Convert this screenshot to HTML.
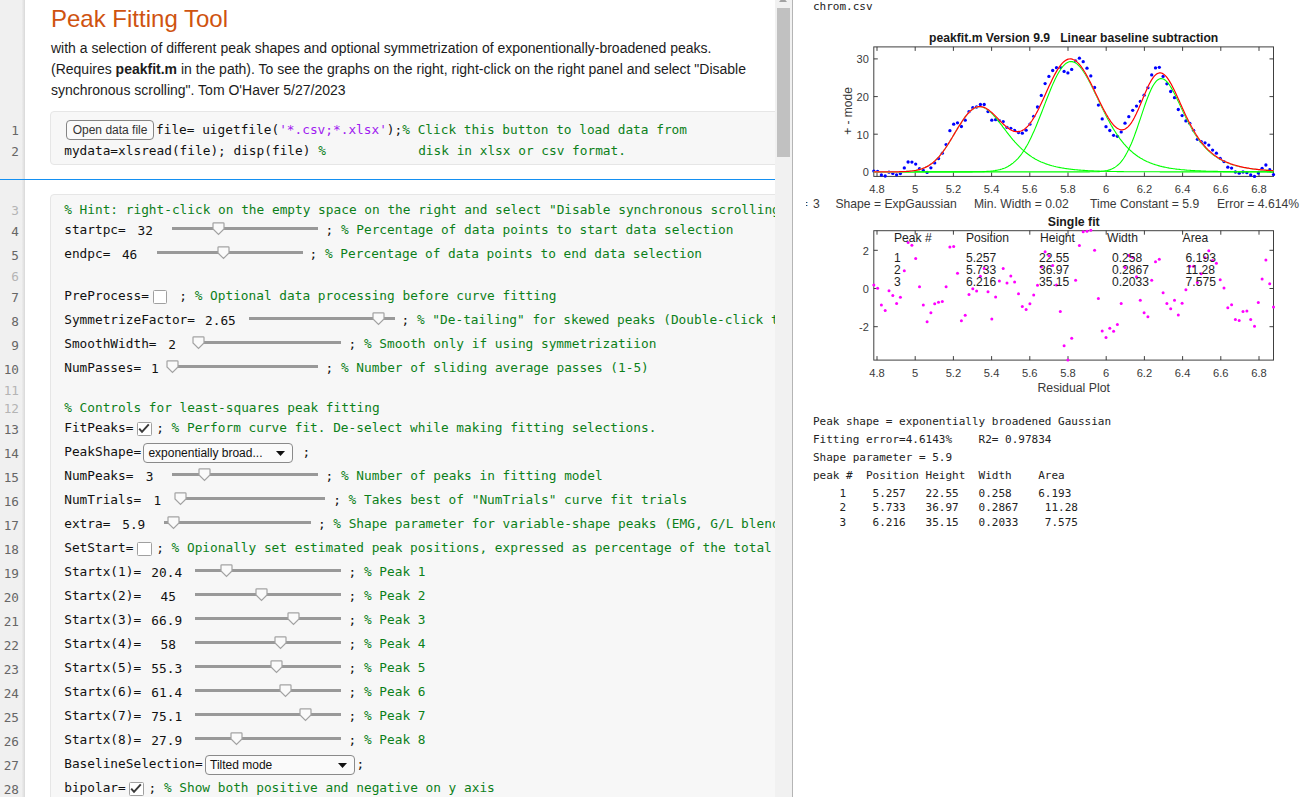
<!DOCTYPE html>
<html lang="en"><head><meta charset="utf-8"><title>Peak Fitting Tool</title>
<style>
html,body{margin:0;padding:0}
body{width:1303px;height:797px;overflow:hidden;position:relative;background:#fff;font-family:"Liberation Sans",Arial,sans-serif;color:#1c1c1c}
#left{position:absolute;left:0;top:0;width:775px;height:797px;overflow:hidden;background:#fff}
#gut{position:absolute;left:0;top:0;width:24.5px;height:797px;background:linear-gradient(90deg,#f0f0f0 0,#f0f0f0 21.5px,#dcdcdc 24.5px)}
#gut em{position:absolute;right:5.5px;font:normal 12.7px/18px "DejaVu Sans Mono","Liberation Mono",monospace;color:#666;font-style:normal}
#gut em.l{color:#b4b4b4}
h1{position:absolute;left:51px;top:4px;margin:0;font-size:24px;line-height:30px;font-weight:normal;color:#cf5310;white-space:nowrap}
p{position:absolute;left:51px;top:37.5px;margin:0;font-size:14px;line-height:21px;white-space:nowrap;color:#1c1c1c}
.blk{position:absolute;left:50px;width:760px;background:#f7f7f7;border:1px solid #e6e6e6;border-radius:4px;box-sizing:border-box}
#code span{position:absolute;font:12.79px/20px "DejaVu Sans Mono","Liberation Mono",monospace;white-space:pre;color:#111}
#code b{font-weight:normal}
#code b.c{color:#0c8019}
#code b.s{color:#a020f0}
#code i{position:absolute;font-style:normal;box-sizing:border-box}
i.tr{height:3px;background:#999}
svg.th{position:absolute}
i.cb{width:14.6px;height:14px;border:1.3px solid #a0a0a0;border-radius:1.5px;background:#fff;overflow:hidden}
i.dd{width:149.5px;height:19.8px;border:1px solid #8a8a8a;border-radius:4px;background:#fafafa}
i.dd u{position:absolute;left:4px;top:-0.5px;text-decoration:none;font:12px/18px "Liberation Sans",Arial,sans-serif;color:#111;white-space:nowrap}
i.btn{width:87.5px;height:20px;border:1px solid #858585;border-radius:4px;background:#fafafa;font:12px/18px "Liberation Sans",Arial,sans-serif;color:#333;text-align:center;white-space:nowrap}
#hr{position:absolute;left:0;top:179px;width:775px;height:1.3px;background:#1490f2}
#sb{position:absolute;left:775px;top:0;width:17px;height:797px;background:#f1f1f1}
#sb i{position:absolute;left:2px;top:8px;width:13px;height:148.5px;background:#c1c1c1}
#sb b{position:absolute;left:4px;top:-3px;width:0;height:0;border-left:4.5px solid transparent;border-right:4.5px solid transparent;border-bottom:5px solid #a3a3a3}
#dv{position:absolute;left:791.5px;top:0;width:1.5px;height:797px;background:linear-gradient(90deg,#d0d0d0,#999)}
#right{position:absolute;left:793px;top:0;width:510px;height:797px;background:#fff;overflow:hidden}
pre{position:absolute;margin:0;font:11px/18px "DejaVu Sans Mono","Liberation Mono",monospace;color:#222;white-space:pre}
</style></head><body>
<div id="left">
<div id="gut"><em style="top:122px">1</em><em style="top:143px">2</em><em class="l" style="top:202px">3</em><em style="top:223px">4</em><em style="top:247px">5</em><em class="l" style="top:268px">6</em><em style="top:289px">7</em><em style="top:313px">8</em><em style="top:337px">9</em><em style="top:361px">10</em><em class="l" style="top:382px">11</em><em class="l" style="top:400px">12</em><em style="top:421px">13</em><em style="top:445px">14</em><em style="top:469px">15</em><em style="top:493px">16</em><em style="top:517px">17</em><em style="top:541px">18</em><em style="top:565px">19</em><em style="top:589px">20</em><em style="top:613px">21</em><em style="top:637px">22</em><em style="top:661px">23</em><em style="top:685px">24</em><em style="top:709px">25</em><em style="top:733px">26</em><em style="top:757px">27</em><em style="top:781px">28</em></div>
<h1>Peak Fitting Tool</h1>
<p>with a selection of different peak shapes and optional symmetrization of exponentionally-broadened peaks.<br>(Requires <b>peakfit.m</b> in the path). To see the graphs on the right, right-click on the right panel and select "Disable<br>synchronous scrolling". Tom O'Haver 5/27/2023</p>
<div class="blk" style="top:111px;height:54px"></div>
<div class="blk" style="top:194px;height:640px"></div>
<div id="hr"></div>
<div id="code">
<i class="btn" style="left:66.3px;top:120px">Open data file</i>
<span style="left:156.0px;top:119.6px">file= uigetfile(<b class="s">'*.csv;*.xlsx'</b>);<b class="c">% Click this button to load data from</b></span>
<span style="left:64.2px;top:140.6px">mydata=xlsread(file); disp(file) <b class="c">%            disk in xlsx or csv format.</b></span>
<span style="left:64.2px;top:199.9px"><b class="c">% Hint: right-click on the empty space on the right and select "Disable synchronous scrolling"</b></span>
<span style="left:64.2px;top:220.1px">startpc=</span><span style="left:137.5px;top:220.9px">32</span><i class="tr" style="left:171.9px;top:227.0px;width:145.8px"></i><svg class="th" style="left:212.3px;top:222.2px" width="13" height="15" viewBox="0 0 13 15"><path d="M1 1.6Q1 0.8 1.8 0.8H11.2Q12 0.8 12 1.6V7L6.5 12.5L1 7Z" fill="#fafafa" stroke="#a2a2a2" stroke-width="1.2"/></svg><span style="left:325.5px;top:220.1px">; <b class="c">% Percentage of data points to start data selection</b></span>
<span style="left:64.2px;top:244.1px">endpc=</span><span style="left:121.9px;top:244.9px">46</span><i class="tr" style="left:156.6px;top:251.0px;width:146.4px"></i><svg class="th" style="left:217.2px;top:246.2px" width="13" height="15" viewBox="0 0 13 15"><path d="M1 1.6Q1 0.8 1.8 0.8H11.2Q12 0.8 12 1.6V7L6.5 12.5L1 7Z" fill="#fafafa" stroke="#a2a2a2" stroke-width="1.2"/></svg><span style="left:309.6px;top:244.1px">; <b class="c">% Percentage of data points to end data selection</b></span>
<span style="left:64.2px;top:286.1px">PreProcess=</span><i class="cb" style="left:152.5px;top:289.8px"></i><span style="left:171.6px;top:286.1px"> ; <b class="c">% Optional data processing before curve fitting</b></span>
<span style="left:64.2px;top:310.1px">SymmetrizeFactor=</span><span style="left:205.0px;top:310.9px">2.65</span><i class="tr" style="left:249.3px;top:317.0px;width:146.0px"></i><svg class="th" style="left:371.9px;top:312.2px" width="13" height="15" viewBox="0 0 13 15"><path d="M1 1.6Q1 0.8 1.8 0.8H11.2Q12 0.8 12 1.6V7L6.5 12.5L1 7Z" fill="#fafafa" stroke="#a2a2a2" stroke-width="1.2"/></svg><span style="left:401.6px;top:310.1px">; <b class="c">% "De-tailing" for skewed peaks (Double-click to change the range)</b></span>
<span style="left:64.2px;top:334.1px">SmoothWidth=</span><span style="left:168.2px;top:334.9px">2</span><i class="tr" style="left:194.5px;top:341.0px;width:146.2px"></i><svg class="th" style="left:192.4px;top:336.2px" width="13" height="15" viewBox="0 0 13 15"><path d="M1 1.6Q1 0.8 1.8 0.8H11.2Q12 0.8 12 1.6V7L6.5 12.5L1 7Z" fill="#fafafa" stroke="#a2a2a2" stroke-width="1.2"/></svg><span style="left:348.6px;top:334.1px">; <b class="c">% Smooth only if using symmetrizatiion</b></span>
<span style="left:64.2px;top:358.1px">NumPasses=</span><span style="left:151.0px;top:358.9px">1</span><i class="tr" style="left:168.5px;top:365.0px;width:149.2px"></i><svg class="th" style="left:166.2px;top:360.2px" width="13" height="15" viewBox="0 0 13 15"><path d="M1 1.6Q1 0.8 1.8 0.8H11.2Q12 0.8 12 1.6V7L6.5 12.5L1 7Z" fill="#fafafa" stroke="#a2a2a2" stroke-width="1.2"/></svg><span style="left:325.6px;top:358.1px">; <b class="c">% Number of sliding average passes (1-5)</b></span>
<span style="left:64.2px;top:397.9px"><b class="c">% Controls for least-squares peak fitting</b></span>
<span style="left:64.2px;top:418.3px">FitPeaks=</span><i class="cb" style="left:137.1px;top:422.0px"><svg width="12" height="12" viewBox="0 0 12 12" style="position:absolute;left:0;top:0"><path d="M1.2 5.7L4 8.8L10.8 1.3" fill="none" stroke="#3a3a3a" stroke-width="2"/></svg></i><span style="left:156.2px;top:418.3px">; <b class="c">% Perform curve fit. De-select while making fitting selections.</b></span>
<span style="left:64.2px;top:442.3px">PeakShape=</span><i class="dd" style="left:143.4px;top:443.2px"><u>exponentially broad...</u><svg width="9" height="5" viewBox="0 0 9 5" style="position:absolute;right:6.5px;top:7px"><path d="M0 0H9L4.5 5Z" fill="#111"/></svg></i><span style="left:294.8px;top:442.3px"> ;</span>
<span style="left:64.2px;top:466.1px">NumPeaks=</span><span style="left:145.8px;top:466.9px">3</span><i class="tr" style="left:171.9px;top:473.0px;width:145.8px"></i><svg class="th" style="left:198.2px;top:468.2px" width="13" height="15" viewBox="0 0 13 15"><path d="M1 1.6Q1 0.8 1.8 0.8H11.2Q12 0.8 12 1.6V7L6.5 12.5L1 7Z" fill="#fafafa" stroke="#a2a2a2" stroke-width="1.2"/></svg><span style="left:325.6px;top:466.1px">; <b class="c">% Number of peaks in fitting model</b></span>
<span style="left:64.2px;top:490.1px">NumTrials=</span><span style="left:153.5px;top:490.9px">1</span><i class="tr" style="left:176.0px;top:497.0px;width:149.4px"></i><svg class="th" style="left:173.9px;top:492.2px" width="13" height="15" viewBox="0 0 13 15"><path d="M1 1.6Q1 0.8 1.8 0.8H11.2Q12 0.8 12 1.6V7L6.5 12.5L1 7Z" fill="#fafafa" stroke="#a2a2a2" stroke-width="1.2"/></svg><span style="left:333.2px;top:490.1px">; <b class="c">% Takes best of "NumTrials" curve fit trials</b></span>
<span style="left:64.2px;top:514.1px">extra=</span><span style="left:122.2px;top:514.9px">5.9</span><i class="tr" style="left:164.2px;top:521.0px;width:146.5px"></i><svg class="th" style="left:167.2px;top:516.2px" width="13" height="15" viewBox="0 0 13 15"><path d="M1 1.6Q1 0.8 1.8 0.8H11.2Q12 0.8 12 1.6V7L6.5 12.5L1 7Z" fill="#fafafa" stroke="#a2a2a2" stroke-width="1.2"/></svg><span style="left:317.9px;top:514.1px">; <b class="c">% Shape parameter for variable-shape peaks (EMG, G/L blend, etc)</b></span>
<span style="left:64.2px;top:538.1px">SetStart=</span><i class="cb" style="left:137.1px;top:541.8px"></i><span style="left:156.2px;top:538.1px">; <b class="c">% Opionally set estimated peak positions, expressed as percentage of the total range</b></span>
<span style="left:64.2px;top:562.1px">Startx(1)=</span><span style="left:151.3px;top:562.9px">20.4</span><i class="tr" style="left:195.0px;top:569.0px;width:145.8px"></i><svg class="th" style="left:219.6px;top:564.2px" width="13" height="15" viewBox="0 0 13 15"><path d="M1 1.6Q1 0.8 1.8 0.8H11.2Q12 0.8 12 1.6V7L6.5 12.5L1 7Z" fill="#fafafa" stroke="#a2a2a2" stroke-width="1.2"/></svg><span style="left:348.6px;top:562.1px">; <b class="c">% Peak 1</b></span>
<span style="left:64.2px;top:586.1px">Startx(2)=</span><span style="left:160.5px;top:586.9px">45</span><i class="tr" style="left:195.0px;top:593.0px;width:145.8px"></i><svg class="th" style="left:255.3px;top:588.2px" width="13" height="15" viewBox="0 0 13 15"><path d="M1 1.6Q1 0.8 1.8 0.8H11.2Q12 0.8 12 1.6V7L6.5 12.5L1 7Z" fill="#fafafa" stroke="#a2a2a2" stroke-width="1.2"/></svg><span style="left:348.6px;top:586.1px">; <b class="c">% Peak 2</b></span>
<span style="left:64.2px;top:610.1px">Startx(3)=</span><span style="left:151.3px;top:610.9px">66.9</span><i class="tr" style="left:195.0px;top:617.0px;width:145.8px"></i><svg class="th" style="left:287.2px;top:612.2px" width="13" height="15" viewBox="0 0 13 15"><path d="M1 1.6Q1 0.8 1.8 0.8H11.2Q12 0.8 12 1.6V7L6.5 12.5L1 7Z" fill="#fafafa" stroke="#a2a2a2" stroke-width="1.2"/></svg><span style="left:348.6px;top:610.1px">; <b class="c">% Peak 3</b></span>
<span style="left:64.2px;top:634.1px">Startx(4)=</span><span style="left:160.5px;top:634.9px">58</span><i class="tr" style="left:195.0px;top:641.0px;width:145.8px"></i><svg class="th" style="left:274.0px;top:636.2px" width="13" height="15" viewBox="0 0 13 15"><path d="M1 1.6Q1 0.8 1.8 0.8H11.2Q12 0.8 12 1.6V7L6.5 12.5L1 7Z" fill="#fafafa" stroke="#a2a2a2" stroke-width="1.2"/></svg><span style="left:348.6px;top:634.1px">; <b class="c">% Peak 4</b></span>
<span style="left:64.2px;top:658.1px">Startx(5)=</span><span style="left:151.3px;top:658.9px">55.3</span><i class="tr" style="left:195.0px;top:665.0px;width:145.8px"></i><svg class="th" style="left:270.3px;top:660.2px" width="13" height="15" viewBox="0 0 13 15"><path d="M1 1.6Q1 0.8 1.8 0.8H11.2Q12 0.8 12 1.6V7L6.5 12.5L1 7Z" fill="#fafafa" stroke="#a2a2a2" stroke-width="1.2"/></svg><span style="left:348.6px;top:658.1px">; <b class="c">% Peak 5</b></span>
<span style="left:64.2px;top:682.1px">Startx(6)=</span><span style="left:151.3px;top:682.9px">61.4</span><i class="tr" style="left:195.0px;top:689.0px;width:145.8px"></i><svg class="th" style="left:279.2px;top:684.2px" width="13" height="15" viewBox="0 0 13 15"><path d="M1 1.6Q1 0.8 1.8 0.8H11.2Q12 0.8 12 1.6V7L6.5 12.5L1 7Z" fill="#fafafa" stroke="#a2a2a2" stroke-width="1.2"/></svg><span style="left:348.6px;top:682.1px">; <b class="c">% Peak 6</b></span>
<span style="left:64.2px;top:706.1px">Startx(7)=</span><span style="left:151.3px;top:706.9px">75.1</span><i class="tr" style="left:195.0px;top:713.0px;width:145.8px"></i><svg class="th" style="left:298.8px;top:708.2px" width="13" height="15" viewBox="0 0 13 15"><path d="M1 1.6Q1 0.8 1.8 0.8H11.2Q12 0.8 12 1.6V7L6.5 12.5L1 7Z" fill="#fafafa" stroke="#a2a2a2" stroke-width="1.2"/></svg><span style="left:348.6px;top:706.1px">; <b class="c">% Peak 7</b></span>
<span style="left:64.2px;top:730.1px">Startx(8)=</span><span style="left:151.3px;top:730.9px">27.9</span><i class="tr" style="left:195.0px;top:737.0px;width:145.8px"></i><svg class="th" style="left:229.8px;top:732.2px" width="13" height="15" viewBox="0 0 13 15"><path d="M1 1.6Q1 0.8 1.8 0.8H11.2Q12 0.8 12 1.6V7L6.5 12.5L1 7Z" fill="#fafafa" stroke="#a2a2a2" stroke-width="1.2"/></svg><span style="left:348.6px;top:730.1px">; <b class="c">% Peak 8</b></span>
<span style="left:64.2px;top:754.1px">BaselineSelection=</span><i class="dd" style="left:205.0px;top:755.0px"><u>Tilted mode</u><svg width="9" height="5" viewBox="0 0 9 5" style="position:absolute;right:6.5px;top:7px"><path d="M0 0H9L4.5 5Z" fill="#111"/></svg></i><span style="left:356.4px;top:754.1px">;</span>
<span style="left:64.2px;top:778.1px">bipolar=</span><i class="cb" style="left:129.4px;top:781.8px"><svg width="12" height="12" viewBox="0 0 12 12" style="position:absolute;left:0;top:0"><path d="M1.2 5.7L4 8.8L10.8 1.3" fill="none" stroke="#3a3a3a" stroke-width="2"/></svg></i><span style="left:148.5px;top:778.1px">; <b class="c">% Show both positive and negative on y axis</b></span>
</div>
</div>
<div id="sb"><b></b><i></i></div>
<div id="dv"></div>
<div id="right">
<pre style="left:20px;top:-2px">chrom.csv</pre>
<pre style="left:20px;top:413px">Peak shape = exponentially broadened Gaussian
Fitting error=4.6143%    R2= 0.97834
Shape parameter = 5.9
peak #  Position Height  Width    Area</pre>
<pre style="left:20px;top:487.4px;line-height:14.1px">    1    5.257   22.55   0.258    6.193
    2    5.733   36.97   0.2867    11.28
    3    6.216   35.15   0.2033    7.575</pre>
</div>
<svg width="497" height="375" viewBox="0 0 497 375" style="position:absolute;left:806px;top:25px;overflow:hidden" font-family="Liberation Sans, Arial, sans-serif">
<rect x="67.8" y="21.9" width="399.7" height="129.5" fill="#fff" stroke="#404040" stroke-width="1"/>
<path d="M71.0 151.4v-4M71.0 21.9v4M109.2 151.4v-4M109.2 21.9v4M147.4 151.4v-4M147.4 21.9v4M185.6 151.4v-4M185.6 21.9v4M223.8 151.4v-4M223.8 21.9v4M262.0 151.4v-4M262.0 21.9v4M300.2 151.4v-4M300.2 21.9v4M338.4 151.4v-4M338.4 21.9v4M376.6 151.4v-4M376.6 21.9v4M414.8 151.4v-4M414.8 21.9v4M453.0 151.4v-4M453.0 21.9v4M67.8 146.9h4M467.5 146.9h-4M67.8 109.2h4M467.5 109.2h-4M67.8 71.6h4M467.5 71.6h-4M67.8 33.9h4M467.5 33.9h-4" stroke="#2a2a2a" stroke-width="0.9" fill="none"/>
<text x="71.0" y="167.9" font-size="11.15" fill="#3a3a3a" text-anchor="middle">4.8</text>
<text x="109.2" y="167.9" font-size="11.15" fill="#3a3a3a" text-anchor="middle">5</text>
<text x="147.4" y="167.9" font-size="11.15" fill="#3a3a3a" text-anchor="middle">5.2</text>
<text x="185.6" y="167.9" font-size="11.15" fill="#3a3a3a" text-anchor="middle">5.4</text>
<text x="223.8" y="167.9" font-size="11.15" fill="#3a3a3a" text-anchor="middle">5.6</text>
<text x="262.0" y="167.9" font-size="11.15" fill="#3a3a3a" text-anchor="middle">5.8</text>
<text x="300.2" y="167.9" font-size="11.15" fill="#3a3a3a" text-anchor="middle">6</text>
<text x="338.4" y="167.9" font-size="11.15" fill="#3a3a3a" text-anchor="middle">6.2</text>
<text x="376.6" y="167.9" font-size="11.15" fill="#3a3a3a" text-anchor="middle">6.4</text>
<text x="414.8" y="167.9" font-size="11.15" fill="#3a3a3a" text-anchor="middle">6.6</text>
<text x="453.0" y="167.9" font-size="11.15" fill="#3a3a3a" text-anchor="middle">6.8</text>
<text x="62.8" y="151.3" font-size="11" fill="#3a3a3a" text-anchor="end">0</text>
<text x="62.8" y="113.6" font-size="11" fill="#3a3a3a" text-anchor="end">10</text>
<text x="62.8" y="76.0" font-size="11" fill="#3a3a3a" text-anchor="end">20</text>
<text x="62.8" y="38.3" font-size="11" fill="#3a3a3a" text-anchor="end">30</text>
<clipPath id="c1"><rect x="65.8" y="21.9" width="403.7" height="131.5"/></clipPath>
<g clip-path="url(#c1)">
<g fill="#0000ff"><circle cx="67.8" cy="146.1" r="1.65"/><circle cx="71.6" cy="146.4" r="1.65"/><circle cx="75.4" cy="150.0" r="1.65"/><circle cx="79.2" cy="151.0" r="1.65"/><circle cx="83.0" cy="147.2" r="1.65"/><circle cx="86.8" cy="148.4" r="1.65"/><circle cx="90.6" cy="149.8" r="1.65"/><circle cx="94.4" cy="148.6" r="1.65"/><circle cx="98.3" cy="142.9" r="1.65"/><circle cx="102.1" cy="137.0" r="1.65"/><circle cx="105.9" cy="137.1" r="1.65"/><circle cx="109.7" cy="139.1" r="1.65"/><circle cx="113.5" cy="143.7" r="1.65"/><circle cx="117.3" cy="145.4" r="1.65"/><circle cx="121.1" cy="147.4" r="1.65"/><circle cx="124.9" cy="142.8" r="1.65"/><circle cx="128.7" cy="137.9" r="1.65"/><circle cx="132.5" cy="133.5" r="1.65"/><circle cx="136.3" cy="128.2" r="1.65"/><circle cx="140.1" cy="119.6" r="1.65"/><circle cx="143.9" cy="105.7" r="1.65"/><circle cx="147.7" cy="99.2" r="1.65"/><circle cx="151.5" cy="97.8" r="1.65"/><circle cx="155.4" cy="101.5" r="1.65"/><circle cx="159.2" cy="95.2" r="1.65"/><circle cx="163.0" cy="86.7" r="1.65"/><circle cx="166.8" cy="82.7" r="1.65"/><circle cx="170.6" cy="82.0" r="1.65"/><circle cx="174.4" cy="79.5" r="1.65"/><circle cx="178.2" cy="79.5" r="1.65"/><circle cx="182.0" cy="86.6" r="1.65"/><circle cx="185.8" cy="95.2" r="1.65"/><circle cx="189.6" cy="94.7" r="1.65"/><circle cx="193.4" cy="95.7" r="1.65"/><circle cx="197.2" cy="96.6" r="1.65"/><circle cx="201.0" cy="102.4" r="1.65"/><circle cx="204.8" cy="103.3" r="1.65"/><circle cx="208.6" cy="105.3" r="1.65"/><circle cx="212.5" cy="107.5" r="1.65"/><circle cx="216.3" cy="108.2" r="1.65"/><circle cx="220.1" cy="105.2" r="1.65"/><circle cx="223.9" cy="99.2" r="1.65"/><circle cx="227.7" cy="91.3" r="1.65"/><circle cx="231.5" cy="82.0" r="1.65"/><circle cx="235.3" cy="70.4" r="1.65"/><circle cx="239.1" cy="58.6" r="1.65"/><circle cx="242.9" cy="51.4" r="1.65"/><circle cx="246.7" cy="45.5" r="1.65"/><circle cx="250.5" cy="42.7" r="1.65"/><circle cx="254.3" cy="42.3" r="1.65"/><circle cx="258.1" cy="46.4" r="1.65"/><circle cx="261.9" cy="47.9" r="1.65"/><circle cx="265.7" cy="44.4" r="1.65"/><circle cx="269.6" cy="35.8" r="1.65"/><circle cx="273.4" cy="33.2" r="1.65"/><circle cx="277.2" cy="36.7" r="1.65"/><circle cx="281.0" cy="43.2" r="1.65"/><circle cx="284.8" cy="50.9" r="1.65"/><circle cx="288.6" cy="62.5" r="1.65"/><circle cx="292.4" cy="80.1" r="1.65"/><circle cx="296.2" cy="93.9" r="1.65"/><circle cx="300.0" cy="101.7" r="1.65"/><circle cx="303.8" cy="105.5" r="1.65"/><circle cx="307.6" cy="110.3" r="1.65"/><circle cx="311.4" cy="111.3" r="1.65"/><circle cx="315.2" cy="106.9" r="1.65"/><circle cx="319.0" cy="98.2" r="1.65"/><circle cx="322.8" cy="91.7" r="1.65"/><circle cx="326.7" cy="85.3" r="1.65"/><circle cx="330.5" cy="81.1" r="1.65"/><circle cx="334.3" cy="76.4" r="1.65"/><circle cx="338.1" cy="70.2" r="1.65"/><circle cx="341.9" cy="62.7" r="1.65"/><circle cx="345.7" cy="49.9" r="1.65"/><circle cx="349.5" cy="42.9" r="1.65"/><circle cx="353.3" cy="42.3" r="1.65"/><circle cx="357.1" cy="51.4" r="1.65"/><circle cx="360.9" cy="58.8" r="1.65"/><circle cx="364.7" cy="66.5" r="1.65"/><circle cx="368.5" cy="72.7" r="1.65"/><circle cx="372.3" cy="84.5" r="1.65"/><circle cx="376.1" cy="90.6" r="1.65"/><circle cx="379.9" cy="95.9" r="1.65"/><circle cx="383.8" cy="98.3" r="1.65"/><circle cx="387.6" cy="105.3" r="1.65"/><circle cx="391.4" cy="114.3" r="1.65"/><circle cx="395.2" cy="116.6" r="1.65"/><circle cx="399.0" cy="117.8" r="1.65"/><circle cx="402.8" cy="120.1" r="1.65"/><circle cx="406.6" cy="125.1" r="1.65"/><circle cx="410.4" cy="128.2" r="1.65"/><circle cx="414.2" cy="133.3" r="1.65"/><circle cx="418.0" cy="136.6" r="1.65"/><circle cx="421.8" cy="142.2" r="1.65"/><circle cx="425.6" cy="143.1" r="1.65"/><circle cx="429.4" cy="147.0" r="1.65"/><circle cx="433.2" cy="148.2" r="1.65"/><circle cx="437.0" cy="147.0" r="1.65"/><circle cx="440.9" cy="147.7" r="1.65"/><circle cx="444.7" cy="150.0" r="1.65"/><circle cx="448.5" cy="151.4" r="1.65"/><circle cx="452.3" cy="148.0" r="1.65"/><circle cx="456.1" cy="143.3" r="1.65"/><circle cx="459.9" cy="140.0" r="1.65"/><circle cx="463.7" cy="144.7" r="1.65"/><circle cx="467.5" cy="149.6" r="1.65"/></g>
<path d="M67.8 146.9 L68.8 146.9 L69.8 146.9 L70.8 146.9 L71.8 146.9 L72.8 146.9 L73.8 146.9 L74.8 146.9 L75.8 146.9 L76.8 146.9 L77.8 146.9 L78.8 146.9 L79.8 146.9 L80.8 146.9 L81.8 146.9 L82.8 146.9 L83.8 146.9 L84.8 146.9 L85.8 146.9 L86.8 146.8 L87.8 146.8 L88.8 146.8 L89.8 146.8 L90.8 146.8 L91.8 146.8 L92.8 146.8 L93.8 146.7 L94.8 146.7 L95.8 146.7 L96.9 146.6 L97.9 146.6 L98.9 146.6 L99.9 146.5 L100.9 146.4 L101.9 146.4 L102.9 146.3 L103.9 146.2 L104.9 146.1 L105.9 146.0 L106.9 145.8 L107.9 145.7 L108.9 145.5 L109.9 145.4 L110.9 145.2 L111.9 144.9 L112.9 144.7 L113.9 144.4 L114.9 144.1 L115.9 143.8 L116.9 143.4 L117.9 143.0 L118.9 142.6 L119.9 142.1 L120.9 141.6 L121.9 141.1 L122.9 140.5 L123.9 139.8 L124.9 139.1 L125.9 138.4 L126.9 137.6 L127.9 136.8 L128.9 135.9 L129.9 134.9 L130.9 133.9 L131.9 132.9 L132.9 131.8 L133.9 130.6 L134.9 129.4 L135.9 128.1 L136.9 126.8 L137.9 125.4 L138.9 124.0 L139.9 122.5 L140.9 121.0 L141.9 119.5 L142.9 117.9 L143.9 116.3 L144.9 114.6 L145.9 113.0 L146.9 111.3 L147.9 109.6 L148.9 107.9 L149.9 106.3 L150.9 104.6 L151.9 102.9 L152.9 101.3 L154.0 99.6 L155.0 98.1 L156.0 96.5 L157.0 95.0 L158.0 93.6 L159.0 92.2 L160.0 90.9 L161.0 89.7 L162.0 88.5 L163.0 87.4 L164.0 86.4 L165.0 85.5 L166.0 84.7 L167.0 84.0 L168.0 83.3 L169.0 82.8 L170.0 82.4 L171.0 82.1 L172.0 81.9 L173.0 81.8 L174.0 81.8 L175.0 81.8 L176.0 82.0 L177.0 82.3 L178.0 82.7 L179.0 83.2 L180.0 83.7 L181.0 84.4 L182.0 85.1 L183.0 85.9 L184.0 86.8 L185.0 87.7 L186.0 88.7 L187.0 89.7 L188.0 90.8 L189.0 92.0 L190.0 93.1 L191.0 94.4 L192.0 95.6 L193.0 96.9 L194.0 98.1 L195.0 99.4 L196.0 100.7 L197.0 102.1 L198.0 103.4 L199.0 104.7 L200.0 106.0 L201.0 107.3 L202.0 108.6 L203.0 109.9 L204.0 111.1 L205.0 112.4 L206.0 113.6 L207.0 114.8 L208.0 115.9 L209.0 117.1 L210.0 118.2 L211.1 119.3 L212.1 120.3 L213.1 121.4 L214.1 122.4 L215.1 123.3 L216.1 124.3 L217.1 125.2 L218.1 126.1 L219.1 126.9 L220.1 127.7 L221.1 128.5 L222.1 129.3 L223.1 130.0 L224.1 130.7 L225.1 131.4 L226.1 132.1 L227.1 132.7 L228.1 133.3 L229.1 133.9 L230.1 134.4 L231.1 135.0 L232.1 135.5 L233.1 136.0 L234.1 136.4 L235.1 136.9 L236.1 137.3 L237.1 137.7 L238.1 138.1 L239.1 138.5 L240.1 138.9 L241.1 139.2 L242.1 139.6 L243.1 139.9 L244.1 140.2 L245.1 140.5 L246.1 140.8 L247.1 141.0 L248.1 141.3 L249.1 141.5 L250.1 141.8 L251.1 142.0 L252.1 142.2 L253.1 142.4 L254.1 142.6 L255.1 142.8 L256.1 143.0 L257.1 143.1 L258.1 143.3 L259.1 143.5 L260.1 143.6 L261.1 143.8 L262.1 143.9 L263.1 144.0 L264.1 144.1 L265.1 144.3 L266.1 144.4 L267.1 144.5 L268.2 144.6 L269.2 144.7 L270.2 144.8 L271.2 144.9 L272.2 145.0 L273.2 145.1 L274.2 145.1 L275.2 145.2 L276.2 145.3 L277.2 145.4 L278.2 145.4 L279.2 145.5 L280.2 145.6 L281.2 145.6 L282.2 145.7 L283.2 145.7 L284.2 145.8 L285.2 145.8 L286.2 145.9 L287.2 145.9 L288.2 146.0 L289.2 146.0 L290.2 146.0 L291.2 146.1 L292.2 146.1 L293.2 146.1 L294.2 146.2 L295.2 146.2 L296.2 146.2 L297.2 146.3 L298.2 146.3 L299.2 146.3 L300.2 146.3 L301.2 146.4 L302.2 146.4 L303.2 146.4 L304.2 146.4 L305.2 146.5 L306.2 146.5 L307.2 146.5 L308.2 146.5 L309.2 146.5 L310.2 146.5 L311.2 146.6 L312.2 146.6 L313.2 146.6 L314.2 146.6 L315.2 146.6 L316.2 146.6 L317.2 146.6 L318.2 146.7 L319.2 146.7 L320.2 146.7 L321.2 146.7 L322.2 146.7 L323.2 146.7 L324.2 146.7 L325.3 146.7 L326.3 146.7 L327.3 146.7 L328.3 146.7 L329.3 146.7 L330.3 146.8 L331.3 146.8 L332.3 146.8 L333.3 146.8 L334.3 146.8 L335.3 146.8 L336.3 146.8 L337.3 146.8 L338.3 146.8 L339.3 146.8 L340.3 146.8 L341.3 146.8 L342.3 146.8 L343.3 146.8 L344.3 146.8 L345.3 146.8 L346.3 146.8 L347.3 146.8 L348.3 146.8 L349.3 146.8 L350.3 146.8 L351.3 146.8 L352.3 146.8 L353.3 146.8 L354.3 146.9 L355.3 146.9 L356.3 146.9 L357.3 146.9 L358.3 146.9 L359.3 146.9 L360.3 146.9 L361.3 146.9 L362.3 146.9 L363.3 146.9 L364.3 146.9 L365.3 146.9 L366.3 146.9 L367.3 146.9 L368.3 146.9 L369.3 146.9 L370.3 146.9 L371.3 146.9 L372.3 146.9 L373.3 146.9 L374.3 146.9 L375.3 146.9 L376.3 146.9 L377.3 146.9 L378.3 146.9 L379.3 146.9 L380.3 146.9 L381.3 146.9 L382.4 146.9 L383.4 146.9 L384.4 146.9 L385.4 146.9 L386.4 146.9 L387.4 146.9 L388.4 146.9 L389.4 146.9 L390.4 146.9 L391.4 146.9 L392.4 146.9 L393.4 146.9 L394.4 146.9 L395.4 146.9 L396.4 146.9 L397.4 146.9 L398.4 146.9 L399.4 146.9 L400.4 146.9 L401.4 146.9 L402.4 146.9 L403.4 146.9 L404.4 146.9 L405.4 146.9 L406.4 146.9 L407.4 146.9 L408.4 146.9 L409.4 146.9 L410.4 146.9 L411.4 146.9 L412.4 146.9 L413.4 146.9 L414.4 146.9 L415.4 146.9 L416.4 146.9 L417.4 146.9 L418.4 146.9 L419.4 146.9 L420.4 146.9 L421.4 146.9 L422.4 146.9 L423.4 146.9 L424.4 146.9 L425.4 146.9 L426.4 146.9 L427.4 146.9 L428.4 146.9 L429.4 146.9 L430.4 146.9 L431.4 146.9 L432.4 146.9 L433.4 146.9 L434.4 146.9 L435.4 146.9 L436.4 146.9 L437.4 146.9 L438.4 146.9 L439.5 146.9 L440.5 146.9 L441.5 146.9 L442.5 146.9 L443.5 146.9 L444.5 146.9 L445.5 146.9 L446.5 146.9 L447.5 146.9 L448.5 146.9 L449.5 146.9 L450.5 146.9 L451.5 146.9 L452.5 146.9 L453.5 146.9 L454.5 146.9 L455.5 146.9 L456.5 146.9 L457.5 146.9 L458.5 146.9 L459.5 146.9 L460.5 146.9 L461.5 146.9 L462.5 146.9 L463.5 146.9 L464.5 146.9 L465.5 146.9 L466.5 146.9 L467.5 146.9" fill="none" stroke="#00ff00" stroke-width="1.1"/>
<path d="M67.8 146.9 L68.8 146.9 L69.8 146.9 L70.8 146.9 L71.8 146.9 L72.8 146.9 L73.8 146.9 L74.8 146.9 L75.8 146.9 L76.8 146.9 L77.8 146.9 L78.8 146.9 L79.8 146.9 L80.8 146.9 L81.8 146.9 L82.8 146.9 L83.8 146.9 L84.8 146.9 L85.8 146.9 L86.8 146.9 L87.8 146.9 L88.8 146.9 L89.8 146.9 L90.8 146.9 L91.8 146.9 L92.8 146.9 L93.8 146.9 L94.8 146.9 L95.8 146.9 L96.9 146.9 L97.9 146.9 L98.9 146.9 L99.9 146.9 L100.9 146.9 L101.9 146.9 L102.9 146.9 L103.9 146.9 L104.9 146.9 L105.9 146.9 L106.9 146.9 L107.9 146.9 L108.9 146.9 L109.9 146.9 L110.9 146.9 L111.9 146.9 L112.9 146.9 L113.9 146.9 L114.9 146.9 L115.9 146.9 L116.9 146.9 L117.9 146.9 L118.9 146.9 L119.9 146.9 L120.9 146.9 L121.9 146.9 L122.9 146.9 L123.9 146.9 L124.9 146.9 L125.9 146.9 L126.9 146.9 L127.9 146.9 L128.9 146.9 L129.9 146.9 L130.9 146.9 L131.9 146.9 L132.9 146.9 L133.9 146.9 L134.9 146.9 L135.9 146.9 L136.9 146.9 L137.9 146.9 L138.9 146.9 L139.9 146.9 L140.9 146.9 L141.9 146.9 L142.9 146.9 L143.9 146.9 L144.9 146.9 L145.9 146.9 L146.9 146.9 L147.9 146.9 L148.9 146.9 L149.9 146.9 L150.9 146.9 L151.9 146.9 L152.9 146.9 L154.0 146.9 L155.0 146.9 L156.0 146.9 L157.0 146.9 L158.0 146.9 L159.0 146.9 L160.0 146.9 L161.0 146.9 L162.0 146.9 L163.0 146.9 L164.0 146.9 L165.0 146.9 L166.0 146.9 L167.0 146.8 L168.0 146.8 L169.0 146.8 L170.0 146.8 L171.0 146.8 L172.0 146.8 L173.0 146.8 L174.0 146.7 L175.0 146.7 L176.0 146.7 L177.0 146.6 L178.0 146.6 L179.0 146.5 L180.0 146.5 L181.0 146.4 L182.0 146.4 L183.0 146.3 L184.0 146.2 L185.0 146.1 L186.0 146.0 L187.0 145.9 L188.0 145.7 L189.0 145.6 L190.0 145.4 L191.0 145.2 L192.0 145.0 L193.0 144.8 L194.0 144.6 L195.0 144.3 L196.0 144.0 L197.0 143.6 L198.0 143.3 L199.0 142.9 L200.0 142.4 L201.0 141.9 L202.0 141.4 L203.0 140.8 L204.0 140.2 L205.0 139.5 L206.0 138.8 L207.0 138.1 L208.0 137.2 L209.0 136.3 L210.0 135.4 L211.1 134.3 L212.1 133.3 L213.1 132.1 L214.1 130.9 L215.1 129.6 L216.1 128.2 L217.1 126.7 L218.1 125.2 L219.1 123.6 L220.1 121.9 L221.1 120.2 L222.1 118.4 L223.1 116.5 L224.1 114.5 L225.1 112.4 L226.1 110.3 L227.1 108.1 L228.1 105.9 L229.1 103.6 L230.1 101.2 L231.1 98.8 L232.1 96.3 L233.1 93.8 L234.1 91.3 L235.1 88.7 L236.1 86.2 L237.1 83.6 L238.1 81.0 L239.1 78.4 L240.1 75.8 L241.1 73.2 L242.1 70.7 L243.1 68.2 L244.1 65.7 L245.1 63.3 L246.1 60.9 L247.1 58.6 L248.1 56.4 L249.1 54.3 L250.1 52.3 L251.1 50.3 L252.1 48.5 L253.1 46.8 L254.1 45.2 L255.1 43.7 L256.1 42.4 L257.1 41.2 L258.1 40.1 L259.1 39.1 L260.1 38.3 L261.1 37.7 L262.1 37.2 L263.1 36.8 L264.1 36.6 L265.1 36.6 L266.1 36.6 L267.1 36.9 L268.2 37.2 L269.2 37.7 L270.2 38.4 L271.2 39.1 L272.2 40.0 L273.2 41.0 L274.2 42.1 L275.2 43.4 L276.2 44.7 L277.2 46.1 L278.2 47.7 L279.2 49.3 L280.2 51.0 L281.2 52.7 L282.2 54.5 L283.2 56.4 L284.2 58.3 L285.2 60.3 L286.2 62.3 L287.2 64.3 L288.2 66.4 L289.2 68.4 L290.2 70.5 L291.2 72.6 L292.2 74.7 L293.2 76.8 L294.2 78.9 L295.2 81.0 L296.2 83.0 L297.2 85.0 L298.2 87.1 L299.2 89.0 L300.2 91.0 L301.2 92.9 L302.2 94.8 L303.2 96.6 L304.2 98.4 L305.2 100.2 L306.2 101.9 L307.2 103.6 L308.2 105.2 L309.2 106.8 L310.2 108.4 L311.2 109.8 L312.2 111.3 L313.2 112.7 L314.2 114.1 L315.2 115.4 L316.2 116.7 L317.2 117.9 L318.2 119.1 L319.2 120.2 L320.2 121.3 L321.2 122.4 L322.2 123.4 L323.2 124.4 L324.2 125.3 L325.3 126.2 L326.3 127.1 L327.3 128.0 L328.3 128.8 L329.3 129.5 L330.3 130.3 L331.3 131.0 L332.3 131.7 L333.3 132.3 L334.3 133.0 L335.3 133.6 L336.3 134.1 L337.3 134.7 L338.3 135.2 L339.3 135.7 L340.3 136.2 L341.3 136.7 L342.3 137.1 L343.3 137.5 L344.3 137.9 L345.3 138.3 L346.3 138.7 L347.3 139.1 L348.3 139.4 L349.3 139.7 L350.3 140.0 L351.3 140.3 L352.3 140.6 L353.3 140.9 L354.3 141.2 L355.3 141.4 L356.3 141.7 L357.3 141.9 L358.3 142.1 L359.3 142.3 L360.3 142.5 L361.3 142.7 L362.3 142.9 L363.3 143.1 L364.3 143.2 L365.3 143.4 L366.3 143.5 L367.3 143.7 L368.3 143.8 L369.3 144.0 L370.3 144.1 L371.3 144.2 L372.3 144.3 L373.3 144.4 L374.3 144.5 L375.3 144.7 L376.3 144.7 L377.3 144.8 L378.3 144.9 L379.3 145.0 L380.3 145.1 L381.3 145.2 L382.4 145.3 L383.4 145.3 L384.4 145.4 L385.4 145.5 L386.4 145.5 L387.4 145.6 L388.4 145.6 L389.4 145.7 L390.4 145.7 L391.4 145.8 L392.4 145.8 L393.4 145.9 L394.4 145.9 L395.4 146.0 L396.4 146.0 L397.4 146.1 L398.4 146.1 L399.4 146.1 L400.4 146.2 L401.4 146.2 L402.4 146.2 L403.4 146.3 L404.4 146.3 L405.4 146.3 L406.4 146.3 L407.4 146.4 L408.4 146.4 L409.4 146.4 L410.4 146.4 L411.4 146.4 L412.4 146.5 L413.4 146.5 L414.4 146.5 L415.4 146.5 L416.4 146.5 L417.4 146.6 L418.4 146.6 L419.4 146.6 L420.4 146.6 L421.4 146.6 L422.4 146.6 L423.4 146.6 L424.4 146.6 L425.4 146.7 L426.4 146.7 L427.4 146.7 L428.4 146.7 L429.4 146.7 L430.4 146.7 L431.4 146.7 L432.4 146.7 L433.4 146.7 L434.4 146.7 L435.4 146.7 L436.4 146.8 L437.4 146.8 L438.4 146.8 L439.5 146.8 L440.5 146.8 L441.5 146.8 L442.5 146.8 L443.5 146.8 L444.5 146.8 L445.5 146.8 L446.5 146.8 L447.5 146.8 L448.5 146.8 L449.5 146.8 L450.5 146.8 L451.5 146.8 L452.5 146.8 L453.5 146.8 L454.5 146.8 L455.5 146.8 L456.5 146.8 L457.5 146.8 L458.5 146.8 L459.5 146.8 L460.5 146.8 L461.5 146.9 L462.5 146.9 L463.5 146.9 L464.5 146.9 L465.5 146.9 L466.5 146.9 L467.5 146.9" fill="none" stroke="#00ff00" stroke-width="1.1"/>
<path d="M67.8 146.9 L68.8 146.9 L69.8 146.9 L70.8 146.9 L71.8 146.9 L72.8 146.9 L73.8 146.9 L74.8 146.9 L75.8 146.9 L76.8 146.9 L77.8 146.9 L78.8 146.9 L79.8 146.9 L80.8 146.9 L81.8 146.9 L82.8 146.9 L83.8 146.9 L84.8 146.9 L85.8 146.9 L86.8 146.9 L87.8 146.9 L88.8 146.9 L89.8 146.9 L90.8 146.9 L91.8 146.9 L92.8 146.9 L93.8 146.9 L94.8 146.9 L95.8 146.9 L96.9 146.9 L97.9 146.9 L98.9 146.9 L99.9 146.9 L100.9 146.9 L101.9 146.9 L102.9 146.9 L103.9 146.9 L104.9 146.9 L105.9 146.9 L106.9 146.9 L107.9 146.9 L108.9 146.9 L109.9 146.9 L110.9 146.9 L111.9 146.9 L112.9 146.9 L113.9 146.9 L114.9 146.9 L115.9 146.9 L116.9 146.9 L117.9 146.9 L118.9 146.9 L119.9 146.9 L120.9 146.9 L121.9 146.9 L122.9 146.9 L123.9 146.9 L124.9 146.9 L125.9 146.9 L126.9 146.9 L127.9 146.9 L128.9 146.9 L129.9 146.9 L130.9 146.9 L131.9 146.9 L132.9 146.9 L133.9 146.9 L134.9 146.9 L135.9 146.9 L136.9 146.9 L137.9 146.9 L138.9 146.9 L139.9 146.9 L140.9 146.9 L141.9 146.9 L142.9 146.9 L143.9 146.9 L144.9 146.9 L145.9 146.9 L146.9 146.9 L147.9 146.9 L148.9 146.9 L149.9 146.9 L150.9 146.9 L151.9 146.9 L152.9 146.9 L154.0 146.9 L155.0 146.9 L156.0 146.9 L157.0 146.9 L158.0 146.9 L159.0 146.9 L160.0 146.9 L161.0 146.9 L162.0 146.9 L163.0 146.9 L164.0 146.9 L165.0 146.9 L166.0 146.9 L167.0 146.9 L168.0 146.9 L169.0 146.9 L170.0 146.9 L171.0 146.9 L172.0 146.9 L173.0 146.9 L174.0 146.9 L175.0 146.9 L176.0 146.9 L177.0 146.9 L178.0 146.9 L179.0 146.9 L180.0 146.9 L181.0 146.9 L182.0 146.9 L183.0 146.9 L184.0 146.9 L185.0 146.9 L186.0 146.9 L187.0 146.9 L188.0 146.9 L189.0 146.9 L190.0 146.9 L191.0 146.9 L192.0 146.9 L193.0 146.9 L194.0 146.9 L195.0 146.9 L196.0 146.9 L197.0 146.9 L198.0 146.9 L199.0 146.9 L200.0 146.9 L201.0 146.9 L202.0 146.9 L203.0 146.9 L204.0 146.9 L205.0 146.9 L206.0 146.9 L207.0 146.9 L208.0 146.9 L209.0 146.9 L210.0 146.9 L211.1 146.9 L212.1 146.9 L213.1 146.9 L214.1 146.9 L215.1 146.9 L216.1 146.9 L217.1 146.9 L218.1 146.9 L219.1 146.9 L220.1 146.9 L221.1 146.9 L222.1 146.9 L223.1 146.9 L224.1 146.9 L225.1 146.9 L226.1 146.9 L227.1 146.9 L228.1 146.9 L229.1 146.9 L230.1 146.9 L231.1 146.9 L232.1 146.9 L233.1 146.9 L234.1 146.9 L235.1 146.9 L236.1 146.9 L237.1 146.9 L238.1 146.9 L239.1 146.9 L240.1 146.9 L241.1 146.9 L242.1 146.9 L243.1 146.9 L244.1 146.9 L245.1 146.9 L246.1 146.9 L247.1 146.9 L248.1 146.9 L249.1 146.9 L250.1 146.9 L251.1 146.9 L252.1 146.9 L253.1 146.9 L254.1 146.9 L255.1 146.9 L256.1 146.9 L257.1 146.9 L258.1 146.9 L259.1 146.9 L260.1 146.9 L261.1 146.9 L262.1 146.9 L263.1 146.9 L264.1 146.9 L265.1 146.9 L266.1 146.9 L267.1 146.9 L268.2 146.9 L269.2 146.9 L270.2 146.9 L271.2 146.9 L272.2 146.9 L273.2 146.9 L274.2 146.9 L275.2 146.9 L276.2 146.9 L277.2 146.9 L278.2 146.9 L279.2 146.9 L280.2 146.9 L281.2 146.9 L282.2 146.9 L283.2 146.9 L284.2 146.8 L285.2 146.8 L286.2 146.8 L287.2 146.8 L288.2 146.8 L289.2 146.7 L290.2 146.7 L291.2 146.7 L292.2 146.6 L293.2 146.6 L294.2 146.5 L295.2 146.4 L296.2 146.3 L297.2 146.2 L298.2 146.0 L299.2 145.9 L300.2 145.7 L301.2 145.5 L302.2 145.2 L303.2 144.9 L304.2 144.6 L305.2 144.2 L306.2 143.8 L307.2 143.3 L308.2 142.7 L309.2 142.1 L310.2 141.4 L311.2 140.6 L312.2 139.8 L313.2 138.8 L314.2 137.8 L315.2 136.6 L316.2 135.3 L317.2 134.0 L318.2 132.5 L319.2 130.9 L320.2 129.1 L321.2 127.3 L322.2 125.3 L323.2 123.2 L324.2 121.0 L325.3 118.7 L326.3 116.3 L327.3 113.7 L328.3 111.1 L329.3 108.3 L330.3 105.5 L331.3 102.7 L332.3 99.7 L333.3 96.8 L334.3 93.8 L335.3 90.8 L336.3 87.8 L337.3 84.8 L338.3 81.9 L339.3 79.0 L340.3 76.2 L341.3 73.5 L342.3 71.0 L343.3 68.5 L344.3 66.2 L345.3 64.1 L346.3 62.1 L347.3 60.3 L348.3 58.7 L349.3 57.4 L350.3 56.2 L351.3 55.2 L352.3 54.5 L353.3 54.0 L354.3 53.6 L355.3 53.5 L356.3 53.7 L357.3 54.0 L358.3 54.5 L359.3 55.2 L360.3 56.1 L361.3 57.2 L362.3 58.4 L363.3 59.8 L364.3 61.3 L365.3 62.9 L366.3 64.6 L367.3 66.4 L368.3 68.3 L369.3 70.3 L370.3 72.3 L371.3 74.4 L372.3 76.5 L373.3 78.6 L374.3 80.8 L375.3 82.9 L376.3 85.0 L377.3 87.2 L378.3 89.3 L379.3 91.3 L380.3 93.4 L381.3 95.4 L382.4 97.3 L383.4 99.3 L384.4 101.1 L385.4 102.9 L386.4 104.7 L387.4 106.4 L388.4 108.1 L389.4 109.7 L390.4 111.2 L391.4 112.7 L392.4 114.1 L393.4 115.5 L394.4 116.9 L395.4 118.1 L396.4 119.4 L397.4 120.5 L398.4 121.7 L399.4 122.8 L400.4 123.8 L401.4 124.8 L402.4 125.8 L403.4 126.7 L404.4 127.6 L405.4 128.4 L406.4 129.2 L407.4 130.0 L408.4 130.7 L409.4 131.4 L410.4 132.1 L411.4 132.7 L412.4 133.4 L413.4 133.9 L414.4 134.5 L415.4 135.0 L416.4 135.6 L417.4 136.1 L418.4 136.5 L419.4 137.0 L420.4 137.4 L421.4 137.8 L422.4 138.2 L423.4 138.6 L424.4 139.0 L425.4 139.3 L426.4 139.6 L427.4 140.0 L428.4 140.3 L429.4 140.6 L430.4 140.8 L431.4 141.1 L432.4 141.3 L433.4 141.6 L434.4 141.8 L435.4 142.0 L436.4 142.3 L437.4 142.5 L438.4 142.7 L439.5 142.8 L440.5 143.0 L441.5 143.2 L442.5 143.3 L443.5 143.5 L444.5 143.6 L445.5 143.8 L446.5 143.9 L447.5 144.1 L448.5 144.2 L449.5 144.3 L450.5 144.4 L451.5 144.5 L452.5 144.6 L453.5 144.7 L454.5 144.8 L455.5 144.9 L456.5 145.0 L457.5 145.1 L458.5 145.2 L459.5 145.2 L460.5 145.3 L461.5 145.4 L462.5 145.4 L463.5 145.5 L464.5 145.6 L465.5 145.6 L466.5 145.7 L467.5 145.7" fill="none" stroke="#00ff00" stroke-width="1.1"/>
<path d="M67.8 146.9 L68.8 146.9 L69.8 146.9 L70.8 146.9 L71.8 146.9 L72.8 146.9 L73.8 146.9 L74.8 146.9 L75.8 146.9 L76.8 146.9 L77.8 146.9 L78.8 146.9 L79.8 146.9 L80.8 146.9 L81.8 146.9 L82.8 146.9 L83.8 146.9 L84.8 146.9 L85.8 146.9 L86.8 146.8 L87.8 146.8 L88.8 146.8 L89.8 146.8 L90.8 146.8 L91.8 146.8 L92.8 146.8 L93.8 146.7 L94.8 146.7 L95.8 146.7 L96.9 146.6 L97.9 146.6 L98.9 146.6 L99.9 146.5 L100.9 146.4 L101.9 146.4 L102.9 146.3 L103.9 146.2 L104.9 146.1 L105.9 146.0 L106.9 145.8 L107.9 145.7 L108.9 145.5 L109.9 145.4 L110.9 145.2 L111.9 144.9 L112.9 144.7 L113.9 144.4 L114.9 144.1 L115.9 143.8 L116.9 143.4 L117.9 143.0 L118.9 142.6 L119.9 142.1 L120.9 141.6 L121.9 141.1 L122.9 140.5 L123.9 139.8 L124.9 139.1 L125.9 138.4 L126.9 137.6 L127.9 136.8 L128.9 135.9 L129.9 134.9 L130.9 133.9 L131.9 132.9 L132.9 131.8 L133.9 130.6 L134.9 129.4 L135.9 128.1 L136.9 126.8 L137.9 125.4 L138.9 124.0 L139.9 122.5 L140.9 121.0 L141.9 119.5 L142.9 117.9 L143.9 116.3 L144.9 114.6 L145.9 113.0 L146.9 111.3 L147.9 109.6 L148.9 107.9 L149.9 106.2 L150.9 104.6 L151.9 102.9 L152.9 101.3 L154.0 99.6 L155.0 98.1 L156.0 96.5 L157.0 95.0 L158.0 93.6 L159.0 92.2 L160.0 90.9 L161.0 89.6 L162.0 88.5 L163.0 87.4 L164.0 86.4 L165.0 85.5 L166.0 84.6 L167.0 83.9 L168.0 83.3 L169.0 82.7 L170.0 82.3 L171.0 82.0 L172.0 81.7 L173.0 81.6 L174.0 81.6 L175.0 81.7 L176.0 81.8 L177.0 82.1 L178.0 82.4 L179.0 82.8 L180.0 83.3 L181.0 83.9 L182.0 84.6 L183.0 85.3 L184.0 86.1 L185.0 86.9 L186.0 87.8 L187.0 88.7 L188.0 89.7 L189.0 90.7 L190.0 91.7 L191.0 92.7 L192.0 93.7 L193.0 94.8 L194.0 95.8 L195.0 96.8 L196.0 97.8 L197.0 98.8 L198.0 99.7 L199.0 100.6 L200.0 101.5 L201.0 102.3 L202.0 103.1 L203.0 103.8 L204.0 104.4 L205.0 105.0 L206.0 105.5 L207.0 105.9 L208.0 106.3 L209.0 106.5 L210.0 106.7 L211.1 106.7 L212.1 106.7 L213.1 106.6 L214.1 106.3 L215.1 106.0 L216.1 105.6 L217.1 105.0 L218.1 104.4 L219.1 103.6 L220.1 102.8 L221.1 101.8 L222.1 100.8 L223.1 99.6 L224.1 98.3 L225.1 96.9 L226.1 95.5 L227.1 93.9 L228.1 92.3 L229.1 90.5 L230.1 88.7 L231.1 86.9 L232.1 84.9 L233.1 82.9 L234.1 80.8 L235.1 78.7 L236.1 76.6 L237.1 74.4 L238.1 72.2 L239.1 70.0 L240.1 67.8 L241.1 65.5 L242.1 63.3 L243.1 61.1 L244.1 59.0 L245.1 56.9 L246.1 54.8 L247.1 52.8 L248.1 50.8 L249.1 48.9 L250.1 47.1 L251.1 45.4 L252.1 43.8 L253.1 42.3 L254.1 40.9 L255.1 39.6 L256.1 38.4 L257.1 37.4 L258.1 36.5 L259.1 35.7 L260.1 35.1 L261.1 34.6 L262.1 34.2 L263.1 34.0 L264.1 33.9 L265.1 33.9 L266.1 34.1 L267.1 34.5 L268.2 34.9 L269.2 35.5 L270.2 36.3 L271.2 37.1 L272.2 38.1 L273.2 39.2 L274.2 40.4 L275.2 41.7 L276.2 43.1 L277.2 44.6 L278.2 46.2 L279.2 47.8 L280.2 49.6 L281.2 51.4 L282.2 53.3 L283.2 55.2 L284.2 57.1 L285.2 59.1 L286.2 61.2 L287.2 63.2 L288.2 65.3 L289.2 67.4 L290.2 69.5 L291.2 71.6 L292.2 73.6 L293.2 75.7 L294.2 77.8 L295.2 79.8 L296.2 81.8 L297.2 83.7 L298.2 85.6 L299.2 87.4 L300.2 89.2 L301.2 90.9 L302.2 92.6 L303.2 94.2 L304.2 95.7 L305.2 97.1 L306.2 98.4 L307.2 99.6 L308.2 100.7 L309.2 101.6 L310.2 102.5 L311.2 103.2 L312.2 103.8 L313.2 104.3 L314.2 104.6 L315.2 104.8 L316.2 104.8 L317.2 104.7 L318.2 104.4 L319.2 104.0 L320.2 103.3 L321.2 102.6 L322.2 101.6 L323.2 100.5 L324.2 99.3 L325.3 97.9 L326.3 96.3 L327.3 94.6 L328.3 92.8 L329.3 90.8 L330.3 88.8 L331.3 86.6 L332.3 84.4 L333.3 82.1 L334.3 79.7 L335.3 77.3 L336.3 74.9 L337.3 72.5 L338.3 70.1 L339.3 67.7 L340.3 65.4 L341.3 63.2 L342.3 61.1 L343.3 59.1 L344.3 57.2 L345.3 55.4 L346.3 53.9 L347.3 52.4 L348.3 51.2 L349.3 50.1 L350.3 49.3 L351.3 48.6 L352.3 48.2 L353.3 47.9 L354.3 47.9 L355.3 48.0 L356.3 48.4 L357.3 48.9 L358.3 49.7 L359.3 50.6 L360.3 51.7 L361.3 52.9 L362.3 54.3 L363.3 55.9 L364.3 57.6 L365.3 59.3 L366.3 61.2 L367.3 63.2 L368.3 65.2 L369.3 67.3 L370.3 69.5 L371.3 71.7 L372.3 73.9 L373.3 76.1 L374.3 78.4 L375.3 80.6 L376.3 82.9 L377.3 85.1 L378.3 87.3 L379.3 89.4 L380.3 91.6 L381.3 93.6 L382.4 95.7 L383.4 97.7 L384.4 99.6 L385.4 101.5 L386.4 103.3 L387.4 105.1 L388.4 106.8 L389.4 108.5 L390.4 110.1 L391.4 111.6 L392.4 113.1 L393.4 114.5 L394.4 115.9 L395.4 117.2 L396.4 118.5 L397.4 119.7 L398.4 120.9 L399.4 122.0 L400.4 123.1 L401.4 124.1 L402.4 125.1 L403.4 126.0 L404.4 126.9 L405.4 127.8 L406.4 128.6 L407.4 129.4 L408.4 130.2 L409.4 130.9 L410.4 131.6 L411.4 132.3 L412.4 132.9 L413.4 133.5 L414.4 134.1 L415.4 134.7 L416.4 135.2 L417.4 135.7 L418.4 136.2 L419.4 136.7 L420.4 137.1 L421.4 137.5 L422.4 137.9 L423.4 138.3 L424.4 138.7 L425.4 139.1 L426.4 139.4 L427.4 139.7 L428.4 140.0 L429.4 140.3 L430.4 140.6 L431.4 140.9 L432.4 141.2 L433.4 141.4 L434.4 141.7 L435.4 141.9 L436.4 142.1 L437.4 142.3 L438.4 142.5 L439.5 142.7 L440.5 142.9 L441.5 143.1 L442.5 143.2 L443.5 143.4 L444.5 143.5 L445.5 143.7 L446.5 143.8 L447.5 144.0 L448.5 144.1 L449.5 144.2 L450.5 144.3 L451.5 144.4 L452.5 144.6 L453.5 144.7 L454.5 144.8 L455.5 144.8 L456.5 144.9 L457.5 145.0 L458.5 145.1 L459.5 145.2 L460.5 145.3 L461.5 145.3 L462.5 145.4 L463.5 145.5 L464.5 145.5 L465.5 145.6 L466.5 145.6 L467.5 145.7" fill="none" stroke="#ffffff" stroke-width="1.2"/>
<path d="M67.8 146.9 L68.8 146.9 L69.8 146.9 L70.8 146.9 L71.8 146.9 L72.8 146.9 L73.8 146.9 L74.8 146.9 L75.8 146.9 L76.8 146.9 L77.8 146.9 L78.8 146.9 L79.8 146.9 L80.8 146.9 L81.8 146.9 L82.8 146.9 L83.8 146.9 L84.8 146.9 L85.8 146.9 L86.8 146.8 L87.8 146.8 L88.8 146.8 L89.8 146.8 L90.8 146.8 L91.8 146.8 L92.8 146.8 L93.8 146.7 L94.8 146.7 L95.8 146.7 L96.9 146.6 L97.9 146.6 L98.9 146.6 L99.9 146.5 L100.9 146.4 L101.9 146.4 L102.9 146.3 L103.9 146.2 L104.9 146.1 L105.9 146.0 L106.9 145.8 L107.9 145.7 L108.9 145.5 L109.9 145.4 L110.9 145.2 L111.9 144.9 L112.9 144.7 L113.9 144.4 L114.9 144.1 L115.9 143.8 L116.9 143.4 L117.9 143.0 L118.9 142.6 L119.9 142.1 L120.9 141.6 L121.9 141.1 L122.9 140.5 L123.9 139.8 L124.9 139.1 L125.9 138.4 L126.9 137.6 L127.9 136.8 L128.9 135.9 L129.9 134.9 L130.9 133.9 L131.9 132.9 L132.9 131.8 L133.9 130.6 L134.9 129.4 L135.9 128.1 L136.9 126.8 L137.9 125.4 L138.9 124.0 L139.9 122.5 L140.9 121.0 L141.9 119.5 L142.9 117.9 L143.9 116.3 L144.9 114.6 L145.9 113.0 L146.9 111.3 L147.9 109.6 L148.9 107.9 L149.9 106.2 L150.9 104.6 L151.9 102.9 L152.9 101.3 L154.0 99.6 L155.0 98.1 L156.0 96.5 L157.0 95.0 L158.0 93.6 L159.0 92.2 L160.0 90.9 L161.0 89.6 L162.0 88.5 L163.0 87.4 L164.0 86.4 L165.0 85.5 L166.0 84.6 L167.0 83.9 L168.0 83.3 L169.0 82.7 L170.0 82.3 L171.0 82.0 L172.0 81.7 L173.0 81.6 L174.0 81.6 L175.0 81.7 L176.0 81.8 L177.0 82.1 L178.0 82.4 L179.0 82.8 L180.0 83.3 L181.0 83.9 L182.0 84.6 L183.0 85.3 L184.0 86.1 L185.0 86.9 L186.0 87.8 L187.0 88.7 L188.0 89.7 L189.0 90.7 L190.0 91.7 L191.0 92.7 L192.0 93.7 L193.0 94.8 L194.0 95.8 L195.0 96.8 L196.0 97.8 L197.0 98.8 L198.0 99.7 L199.0 100.6 L200.0 101.5 L201.0 102.3 L202.0 103.1 L203.0 103.8 L204.0 104.4 L205.0 105.0 L206.0 105.5 L207.0 105.9 L208.0 106.3 L209.0 106.5 L210.0 106.7 L211.1 106.7 L212.1 106.7 L213.1 106.6 L214.1 106.3 L215.1 106.0 L216.1 105.6 L217.1 105.0 L218.1 104.4 L219.1 103.6 L220.1 102.8 L221.1 101.8 L222.1 100.8 L223.1 99.6 L224.1 98.3 L225.1 96.9 L226.1 95.5 L227.1 93.9 L228.1 92.3 L229.1 90.5 L230.1 88.7 L231.1 86.9 L232.1 84.9 L233.1 82.9 L234.1 80.8 L235.1 78.7 L236.1 76.6 L237.1 74.4 L238.1 72.2 L239.1 70.0 L240.1 67.8 L241.1 65.5 L242.1 63.3 L243.1 61.1 L244.1 59.0 L245.1 56.9 L246.1 54.8 L247.1 52.8 L248.1 50.8 L249.1 48.9 L250.1 47.1 L251.1 45.4 L252.1 43.8 L253.1 42.3 L254.1 40.9 L255.1 39.6 L256.1 38.4 L257.1 37.4 L258.1 36.5 L259.1 35.7 L260.1 35.1 L261.1 34.6 L262.1 34.2 L263.1 34.0 L264.1 33.9 L265.1 33.9 L266.1 34.1 L267.1 34.5 L268.2 34.9 L269.2 35.5 L270.2 36.3 L271.2 37.1 L272.2 38.1 L273.2 39.2 L274.2 40.4 L275.2 41.7 L276.2 43.1 L277.2 44.6 L278.2 46.2 L279.2 47.8 L280.2 49.6 L281.2 51.4 L282.2 53.3 L283.2 55.2 L284.2 57.1 L285.2 59.1 L286.2 61.2 L287.2 63.2 L288.2 65.3 L289.2 67.4 L290.2 69.5 L291.2 71.6 L292.2 73.6 L293.2 75.7 L294.2 77.8 L295.2 79.8 L296.2 81.8 L297.2 83.7 L298.2 85.6 L299.2 87.4 L300.2 89.2 L301.2 90.9 L302.2 92.6 L303.2 94.2 L304.2 95.7 L305.2 97.1 L306.2 98.4 L307.2 99.6 L308.2 100.7 L309.2 101.6 L310.2 102.5 L311.2 103.2 L312.2 103.8 L313.2 104.3 L314.2 104.6 L315.2 104.8 L316.2 104.8 L317.2 104.7 L318.2 104.4 L319.2 104.0 L320.2 103.3 L321.2 102.6 L322.2 101.6 L323.2 100.5 L324.2 99.3 L325.3 97.9 L326.3 96.3 L327.3 94.6 L328.3 92.8 L329.3 90.8 L330.3 88.8 L331.3 86.6 L332.3 84.4 L333.3 82.1 L334.3 79.7 L335.3 77.3 L336.3 74.9 L337.3 72.5 L338.3 70.1 L339.3 67.7 L340.3 65.4 L341.3 63.2 L342.3 61.1 L343.3 59.1 L344.3 57.2 L345.3 55.4 L346.3 53.9 L347.3 52.4 L348.3 51.2 L349.3 50.1 L350.3 49.3 L351.3 48.6 L352.3 48.2 L353.3 47.9 L354.3 47.9 L355.3 48.0 L356.3 48.4 L357.3 48.9 L358.3 49.7 L359.3 50.6 L360.3 51.7 L361.3 52.9 L362.3 54.3 L363.3 55.9 L364.3 57.6 L365.3 59.3 L366.3 61.2 L367.3 63.2 L368.3 65.2 L369.3 67.3 L370.3 69.5 L371.3 71.7 L372.3 73.9 L373.3 76.1 L374.3 78.4 L375.3 80.6 L376.3 82.9 L377.3 85.1 L378.3 87.3 L379.3 89.4 L380.3 91.6 L381.3 93.6 L382.4 95.7 L383.4 97.7 L384.4 99.6 L385.4 101.5 L386.4 103.3 L387.4 105.1 L388.4 106.8 L389.4 108.5 L390.4 110.1 L391.4 111.6 L392.4 113.1 L393.4 114.5 L394.4 115.9 L395.4 117.2 L396.4 118.5 L397.4 119.7 L398.4 120.9 L399.4 122.0 L400.4 123.1 L401.4 124.1 L402.4 125.1 L403.4 126.0 L404.4 126.9 L405.4 127.8 L406.4 128.6 L407.4 129.4 L408.4 130.2 L409.4 130.9 L410.4 131.6 L411.4 132.3 L412.4 132.9 L413.4 133.5 L414.4 134.1 L415.4 134.7 L416.4 135.2 L417.4 135.7 L418.4 136.2 L419.4 136.7 L420.4 137.1 L421.4 137.5 L422.4 137.9 L423.4 138.3 L424.4 138.7 L425.4 139.1 L426.4 139.4 L427.4 139.7 L428.4 140.0 L429.4 140.3 L430.4 140.6 L431.4 140.9 L432.4 141.2 L433.4 141.4 L434.4 141.7 L435.4 141.9 L436.4 142.1 L437.4 142.3 L438.4 142.5 L439.5 142.7 L440.5 142.9 L441.5 143.1 L442.5 143.2 L443.5 143.4 L444.5 143.5 L445.5 143.7 L446.5 143.8 L447.5 144.0 L448.5 144.1 L449.5 144.2 L450.5 144.3 L451.5 144.4 L452.5 144.6 L453.5 144.7 L454.5 144.8 L455.5 144.8 L456.5 144.9 L457.5 145.0 L458.5 145.1 L459.5 145.2 L460.5 145.3 L461.5 145.3 L462.5 145.4 L463.5 145.5 L464.5 145.5 L465.5 145.6 L466.5 145.6 L467.5 145.7" fill="none" stroke="#ff0000" stroke-width="1.2"/>
</g>
<text x="267.7" y="17" font-size="12.17" font-weight="bold" fill="#1a1a1a" text-anchor="middle" xml:space="preserve">peakfit.m Version 9.9   Linear baseline subtraction</text>
<text transform="translate(46,86) rotate(-90)" font-size="12" fill="#3a3a3a" text-anchor="middle">+ - mode</text>
<text x="7.0" y="183.2" font-size="12.15" fill="#3a3a3a">3</text>
<text x="29.5" y="183.2" font-size="12.15" fill="#3a3a3a">Shape = ExpGaussian</text>
<text x="168.0" y="183.2" font-size="12.15" fill="#3a3a3a">Min. Width = 0.02</text>
<text x="284.0" y="183.2" font-size="12.15" fill="#3a3a3a">Time Constant = 5.9</text>
<text x="411.0" y="183.2" font-size="12.15" fill="#3a3a3a">Error = 4.614%</text>
<text x="524.0" y="183.2" font-size="12.15" fill="#3a3a3a">R2 = 0.9783</text>
<text x="1.8" y="183.2" font-size="12.15" fill="#3a3a3a" text-anchor="end">Peaks =</text>
<rect x="67.8" y="205.7" width="399.7" height="129.4" fill="#fff" stroke="#404040" stroke-width="1"/>
<path d="M71.0 335.1v-4M71.0 205.7v4M109.2 335.1v-4M109.2 205.7v4M147.4 335.1v-4M147.4 205.7v4M185.6 335.1v-4M185.6 205.7v4M223.8 335.1v-4M223.8 205.7v4M262.0 335.1v-4M262.0 205.7v4M300.2 335.1v-4M300.2 205.7v4M338.4 335.1v-4M338.4 205.7v4M376.6 335.1v-4M376.6 205.7v4M414.8 335.1v-4M414.8 205.7v4M453.0 335.1v-4M453.0 205.7v4M67.8 301.7h4M467.5 301.7h-4M67.8 263.5h4M467.5 263.5h-4M67.8 225.3h4M467.5 225.3h-4" stroke="#2a2a2a" stroke-width="0.9" fill="none"/>
<text x="71.0" y="351.6" font-size="11.15" fill="#3a3a3a" text-anchor="middle">4.8</text>
<text x="109.2" y="351.6" font-size="11.15" fill="#3a3a3a" text-anchor="middle">5</text>
<text x="147.4" y="351.6" font-size="11.15" fill="#3a3a3a" text-anchor="middle">5.2</text>
<text x="185.6" y="351.6" font-size="11.15" fill="#3a3a3a" text-anchor="middle">5.4</text>
<text x="223.8" y="351.6" font-size="11.15" fill="#3a3a3a" text-anchor="middle">5.6</text>
<text x="262.0" y="351.6" font-size="11.15" fill="#3a3a3a" text-anchor="middle">5.8</text>
<text x="300.2" y="351.6" font-size="11.15" fill="#3a3a3a" text-anchor="middle">6</text>
<text x="338.4" y="351.6" font-size="11.15" fill="#3a3a3a" text-anchor="middle">6.2</text>
<text x="376.6" y="351.6" font-size="11.15" fill="#3a3a3a" text-anchor="middle">6.4</text>
<text x="414.8" y="351.6" font-size="11.15" fill="#3a3a3a" text-anchor="middle">6.6</text>
<text x="453.0" y="351.6" font-size="11.15" fill="#3a3a3a" text-anchor="middle">6.8</text>
<text x="62.8" y="306.1" font-size="11" fill="#3a3a3a" text-anchor="end">-2</text>
<text x="62.8" y="267.9" font-size="11" fill="#3a3a3a" text-anchor="end">0</text>
<text x="62.8" y="229.7" font-size="11" fill="#3a3a3a" text-anchor="end">2</text>
<clipPath id="c2"><rect x="65.8" y="203.7" width="403.7" height="133.4"/></clipPath>
<g clip-path="url(#c2)" fill="#ff00ff"><circle cx="67.8" cy="259.9" r="1.5"/><circle cx="71.6" cy="263.3" r="1.5"/><circle cx="75.4" cy="279.9" r="1.5"/><circle cx="79.2" cy="285.5" r="1.5"/><circle cx="83.0" cy="265.8" r="1.5"/><circle cx="86.8" cy="270.6" r="1.5"/><circle cx="90.6" cy="278.4" r="1.5"/><circle cx="94.4" cy="272.3" r="1.5"/><circle cx="98.3" cy="245.7" r="1.5"/><circle cx="102.1" cy="217.5" r="1.5"/><circle cx="105.9" cy="220.3" r="1.5"/><circle cx="109.7" cy="233.5" r="1.5"/><circle cx="113.5" cy="261.8" r="1.5"/><circle cx="117.3" cy="280.1" r="1.5"/><circle cx="121.1" cy="296.7" r="1.5"/><circle cx="124.9" cy="287.8" r="1.5"/><circle cx="128.7" cy="278.8" r="1.5"/><circle cx="132.5" cy="277.3" r="1.5"/><circle cx="136.3" cy="276.5" r="1.5"/><circle cx="140.1" cy="261.8" r="1.5"/><circle cx="143.9" cy="221.9" r="1.5"/><circle cx="147.7" cy="221.5" r="1.5"/><circle cx="151.5" cy="248.2" r="1.5"/><circle cx="155.4" cy="295.8" r="1.5"/><circle cx="159.2" cy="290.2" r="1.5"/><circle cx="163.0" cy="269.6" r="1.5"/><circle cx="166.8" cy="263.7" r="1.5"/><circle cx="170.6" cy="266.0" r="1.5"/><circle cx="174.4" cy="251.3" r="1.5"/><circle cx="178.2" cy="243.6" r="1.5"/><circle cx="182.0" cy="266.7" r="1.5"/><circle cx="185.8" cy="293.9" r="1.5"/><circle cx="189.6" cy="272.1" r="1.5"/><circle cx="193.4" cy="256.1" r="1.5"/><circle cx="197.2" cy="243.4" r="1.5"/><circle cx="201.0" cy="258.0" r="1.5"/><circle cx="204.8" cy="251.1" r="1.5"/><circle cx="208.6" cy="257.0" r="1.5"/><circle cx="212.5" cy="268.8" r="1.5"/><circle cx="216.3" cy="281.6" r="1.5"/><circle cx="220.1" cy="284.5" r="1.5"/><circle cx="223.9" cy="278.8" r="1.5"/><circle cx="227.7" cy="270.0" r="1.5"/><circle cx="231.5" cy="260.3" r="1.5"/><circle cx="235.3" cy="242.1" r="1.5"/><circle cx="239.1" cy="226.8" r="1.5"/><circle cx="242.9" cy="230.8" r="1.5"/><circle cx="246.7" cy="240.6" r="1.5"/><circle cx="250.5" cy="259.9" r="1.5"/><circle cx="254.3" cy="286.4" r="1.5"/><circle cx="258.1" cy="320.8" r="1.5"/><circle cx="261.9" cy="335.1" r="1.5"/><circle cx="265.7" cy="313.2" r="1.5"/><circle cx="269.6" cy="255.3" r="1.5"/><circle cx="273.4" cy="220.5" r="1.5"/><circle cx="277.2" cy="206.8" r="1.5"/><circle cx="281.0" cy="206.2" r="1.5"/><circle cx="284.8" cy="205.2" r="1.5"/><circle cx="288.6" cy="225.3" r="1.5"/><circle cx="292.4" cy="273.6" r="1.5"/><circle cx="296.2" cy="306.1" r="1.5"/><circle cx="300.0" cy="312.4" r="1.5"/><circle cx="303.8" cy="303.2" r="1.5"/><circle cx="307.6" cy="306.3" r="1.5"/><circle cx="311.4" cy="299.4" r="1.5"/><circle cx="315.2" cy="278.6" r="1.5"/><circle cx="319.0" cy="242.5" r="1.5"/><circle cx="322.8" cy="230.6" r="1.5"/><circle cx="326.7" cy="232.6" r="1.5"/><circle cx="330.5" cy="251.8" r="1.5"/><circle cx="334.3" cy="275.3" r="1.5"/><circle cx="338.1" cy="287.8" r="1.5"/><circle cx="341.9" cy="291.8" r="1.5"/><circle cx="345.7" cy="255.3" r="1.5"/><circle cx="349.5" cy="236.8" r="1.5"/><circle cx="353.3" cy="234.3" r="1.5"/><circle cx="357.1" cy="267.7" r="1.5"/><circle cx="360.9" cy="278.4" r="1.5"/><circle cx="364.7" cy="283.7" r="1.5"/><circle cx="368.5" cy="275.2" r="1.5"/><circle cx="372.3" cy="290.0" r="1.5"/><circle cx="376.1" cy="278.2" r="1.5"/><circle cx="379.9" cy="264.8" r="1.5"/><circle cx="383.8" cy="241.2" r="1.5"/><circle cx="387.6" cy="241.2" r="1.5"/><circle cx="391.4" cy="257.6" r="1.5"/><circle cx="395.2" cy="248.8" r="1.5"/><circle cx="399.0" cy="232.7" r="1.5"/><circle cx="402.8" cy="225.7" r="1.5"/><circle cx="406.6" cy="235.6" r="1.5"/><circle cx="410.4" cy="238.3" r="1.5"/><circle cx="414.2" cy="254.7" r="1.5"/><circle cx="418.0" cy="263.1" r="1.5"/><circle cx="421.8" cy="282.8" r="1.5"/><circle cx="425.6" cy="279.7" r="1.5"/><circle cx="429.4" cy="294.6" r="1.5"/><circle cx="433.2" cy="295.4" r="1.5"/><circle cx="437.0" cy="286.6" r="1.5"/><circle cx="440.9" cy="286.0" r="1.5"/><circle cx="444.7" cy="294.6" r="1.5"/><circle cx="448.5" cy="301.3" r="1.5"/><circle cx="452.3" cy="277.6" r="1.5"/><circle cx="456.1" cy="253.9" r="1.5"/><circle cx="459.9" cy="234.9" r="1.5"/><circle cx="463.7" cy="258.7" r="1.5"/><circle cx="467.5" cy="282.0" r="1.5"/></g>
<text x="267.7" y="200.8" font-size="12.3" font-weight="bold" fill="#1a1a1a" text-anchor="middle">Single fit</text>
<text x="267.7" y="367" font-size="12.3" fill="#3a3a3a" text-anchor="middle">Residual Plot</text>
<text x="88.0" y="217.4" font-size="12.1" fill="#1e1e1e">Peak #</text>
<text x="88.0" y="237.2" font-size="12.1" fill="#1e1e1e">1</text>
<text x="88.0" y="248.7" font-size="12.1" fill="#1e1e1e">2</text>
<text x="88.0" y="260.7" font-size="12.1" fill="#1e1e1e">3</text>
<text x="160.0" y="217.4" font-size="12.1" fill="#1e1e1e">Position</text>
<text x="160.0" y="237.2" font-size="12.1" fill="#1e1e1e">5.257</text>
<text x="160.0" y="248.7" font-size="12.1" fill="#1e1e1e">5.733</text>
<text x="160.0" y="260.7" font-size="12.1" fill="#1e1e1e">6.216</text>
<text x="234.0" y="217.4" font-size="12.1" fill="#1e1e1e">Height</text>
<text x="233.0" y="237.2" font-size="12.1" fill="#1e1e1e">22.55</text>
<text x="233.0" y="248.7" font-size="12.1" fill="#1e1e1e">36.97</text>
<text x="233.0" y="260.7" font-size="12.1" fill="#1e1e1e">35.15</text>
<text x="301.0" y="217.4" font-size="12.1" fill="#1e1e1e">Width</text>
<text x="306.0" y="237.2" font-size="12.1" fill="#1e1e1e">0.258</text>
<text x="306.0" y="248.7" font-size="12.1" fill="#1e1e1e">0.2867</text>
<text x="306.0" y="260.7" font-size="12.1" fill="#1e1e1e">0.2033</text>
<text x="376.6" y="217.4" font-size="12.1" fill="#1e1e1e">Area</text>
<text x="379.6" y="237.2" font-size="12.1" fill="#1e1e1e">6.193</text>
<text x="379.6" y="248.7" font-size="12.1" fill="#1e1e1e">11.28</text>
<text x="379.6" y="260.7" font-size="12.1" fill="#1e1e1e">7.575</text>
</svg>
</body></html>
